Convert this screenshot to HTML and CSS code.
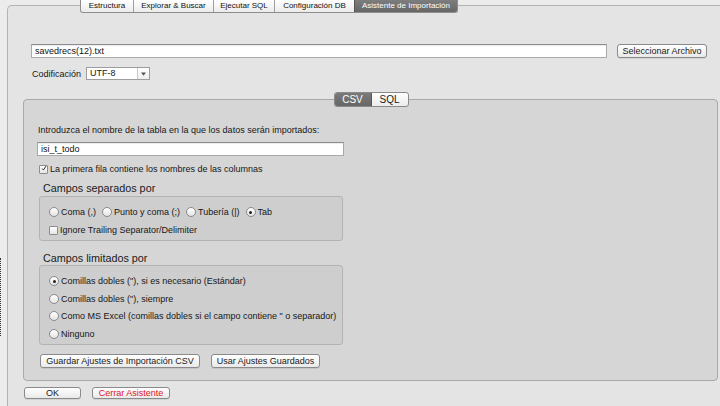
FILE: index.html
```html
<!DOCTYPE html>
<html lang="es">
<head>
<meta charset="utf-8">
<title>Asistente de Importación</title>
<link rel="stylesheet" href="styles.css">
</head>
<body>
<div class="screen">
  <div class="edge"><div class="dots"></div></div>
  <div class="frame">
    <div class="tabs">
      <div class="tab t1">Estructura</div>
      <div class="tab t2">Explorar &amp; Buscar</div>
      <div class="tab t3">Ejecutar SQL</div>
      <div class="tab t4">Configuración DB</div>
      <div class="tab t5 active">Asistente de Importación</div>
    </div>

    <div class="file-row">
      <div class="field file-field">savedrecs(12).txt</div>
      <div class="btn btn-select">Seleccionar Archivo</div>
    </div>

    <div class="enc-row">
      <span class="enc-label">Codificación</span>
      <div class="select"><span class="select-val">UTF-8</span><span class="select-arrow"><svg width="5" height="4" viewBox="0 0 5 4"><path d="M0 0.5 L5 0.5 L2.5 3.8 Z" fill="#555"/></svg></span></div>
    </div>

    <div class="group">
      <div class="seg"><span class="seg-item on">CSV</span><span class="seg-item">SQL</span></div>
      <div class="label">Introduzca el nombre de la tabla en la que los datos serán importados:</div>
      <div class="field table-field">isi_t_todo</div>
      <div class="check-row first-check">
        <span class="checkbox checked"><svg width="9" height="9" viewBox="0 0 9 9"><path d="M1.8 4.6 L3.6 6.8 L7.6 0.8" fill="none" stroke="#222" stroke-width="1.4"/></svg></span>
        <span>La primera fila contiene los nombres de las columnas</span>
      </div>

      <div class="heading h-sep">Campos separados por</div>
      <div class="subbox sep-box">
        <div class="radio-row">
          <span class="opt"><span class="radio"></span>Coma (,)</span>
          <span class="opt"><span class="radio"></span>Punto y coma (;)</span>
          <span class="opt"><span class="radio"></span>Tubería (|)</span>
          <span class="opt"><span class="radio on"></span>Tab</span>
        </div>
        <div class="check-row ignore">
          <span class="checkbox"></span>
          <span>Ignore Trailing Separator/Delimiter</span>
        </div>
      </div>

      <div class="heading h-lim">Campos limitados por</div>
      <div class="subbox lim-box">
        <span class="opt"><span class="radio on"></span>Comillas dobles ("), si es necesario (Estándar)</span>
        <span class="opt"><span class="radio"></span>Comillas dobles ("), siempre</span>
        <span class="opt"><span class="radio"></span>Como MS Excel (comillas dobles si el campo contiene " o separador)</span>
        <span class="opt"><span class="radio"></span>Ninguno</span>
      </div>

      <div class="btn-row">
        <div class="btn btn-save">Guardar Ajustes de Importación CSV</div>
        <div class="btn btn-use">Usar Ajustes Guardados</div>
      </div>
    </div>

    <div class="bottom-row">
      <div class="btn btn-ok">OK</div>
      <div class="btn btn-close">Cerrar Asistente</div>
    </div>
  </div>
</div>
</body>
</html>
```

FILE: styles.css
```css
* { box-sizing: border-box; }
html, body { margin: 0; padding: 0; }
body {
  width: 720px;
  height: 406px;
  overflow: hidden;
  background: #ececec;
  font-family: "Liberation Sans", Arial, sans-serif;
  font-size: 9px;
  color: #161616;
}
.screen { display: flex; height: 406px; }
.edge { width: 7px; flex: none; padding-top: 258px; }
.dots { width: 1px; height: 78px; border-left: 1px dotted #333; }

.frame {
  flex: none;
  width: 720px;
  margin-top: 5px;
  border-top: 1px solid #b3b3b3;
  border-left: 1px solid #b3b3b3;
  border-top-left-radius: 5px;
  background: #e4e4e4;
  display: flex;
  flex-direction: column;
  align-items: flex-start;
}

/* top tabs */
.tabs {
  display: flex;
  margin-top: -6px;
  margin-left: 72px;
  height: 13px;
  border: 1px solid #8e8e8e;
  border-top: none;
  border-radius: 0 0 3px 3px;
  overflow: hidden;
  background: linear-gradient(#ffffff, #ebebeb);
}
.tab {
  height: 12px;
  line-height: 12px;
  text-align: center;
  font-size: 8px;
  color: #111;
  border-left: 1px solid #a0a0a0;
}
.tab.t1 { width: 52px; border-left: none; }
.tab.t2 { width: 80px; }
.tab.t3 { width: 61px; }
.tab.t4 { width: 80px; }
.tab.t5 { width: 103px; }
.tab.active {
  background: linear-gradient(#7d7d7d, #666);
  color: #fff;
  border-left-color: #555;
}

/* fields */
.field {
  background: #fff;
  border: 1px solid #a9a9a9;
  border-top-color: #8c8c8c;
  box-shadow: inset 0 1px 1px rgba(0,0,0,0.08);
  height: 14px;
  line-height: 12px;
  padding-left: 3px;
  color: #111;
}
.file-row {
  display: flex;
  margin-top: 31px;
  margin-left: 23px;
  gap: 10px;
}
.file-field { width: 576px; }

.btn {
  height: 14px;
  line-height: 12px;
  border: 1px solid #8a8a8a;
  border-radius: 3px;
  background: linear-gradient(#ffffff, #e9e9e9);
  box-shadow: 0 1px 0 rgba(0,0,0,0.08);
  text-align: center;
  color: #1a1a1a;
  white-space: nowrap;
}
.btn-select { width: 90px; }

.enc-row {
  display: flex;
  align-items: center;
  margin-top: 9px;
  margin-left: 24px;
  height: 13px;
}
.enc-label { width: 54px; }
.select {
  display: flex;
  width: 64px;
  height: 13px;
  background: #fff;
  border: 1px solid #9d9d9d;
}
.select-val { flex: 1; line-height: 11px; padding-left: 3px; }
.select-arrow {
  width: 12px;
  border-left: 1px solid #c8c8c8;
  display: flex;
  align-items: center;
  justify-content: center;
  background: linear-gradient(#fff, #eee);
}

/* group */
.group {
  margin-top: 19px;
  margin-left: 15px;
  width: 695px;
  height: 282px;
  border: 1px solid #a9a9a9;
  border-radius: 4px;
  background: #d6d6d6;
  padding-left: 14px;
  display: flex;
  flex-direction: column;
  align-items: flex-start;
}
.seg {
  align-self: center;
  display: flex;
  margin-top: -8px;
  margin-left: -13px;
  height: 15px;
  border: 1px solid #8a8a8a;
  border-radius: 3px;
  overflow: hidden;
  background: linear-gradient(#fff, #ececec);
}
.seg-item {
  width: 36px;
  text-align: center;
  line-height: 13px;
  font-size: 10px;
  color: #1a1a1a;
}
.seg-item.on {
  width: 37px;
  background: linear-gradient(#7a7a7a, #666);
  color: #fff;
  border-right: 1px solid #555;
}
.label { margin-top: 18px; height: 11px; line-height: 11px; }
.table-field { margin-top: 6px; margin-left: -1px; width: 307px; }

.check-row { display: flex; align-items: center; height: 12px; gap: 2px; }
.first-check { margin-top: 7px; margin-left: 1px; }
.checkbox {
  width: 9px;
  height: 9px;
  background: linear-gradient(#fff, #e6e6e6);
  border: 1px solid #8d8d8d;
  border-radius: 1px;
  display: flex;
  align-items: center;
  justify-content: center;
  overflow: visible;
}
.checkbox svg { margin-top: -1px; margin-left: 1px; }

.heading {
  font-size: 10.8px;
  height: 13px;
  line-height: 13px;
  margin-left: 5px;
  color: #1a1a1a;
}
.h-sep { margin-top: 7px; }
.h-lim { margin-top: 11px; }

.subbox {
  margin-left: 1px;
  width: 304px;
  border: 1px solid #b3b3b3;
  border-radius: 3px;
  background: #cecece;
  padding-left: 9px;
  display: flex;
  flex-direction: column;
  align-items: flex-start;
}
.sep-box { margin-top: 1px; height: 45px; padding-top: 9px; }
.lim-box { margin-top: 0; height: 80px; padding-top: 9px; gap: 5.7px; }
.radio-row { display: flex; gap: 6px; height: 12px; align-items: center; }
.ignore { margin-top: 6px; }
.opt { display: flex; align-items: center; gap: 2px; height: 12px; }
.radio {
  width: 10px;
  height: 10px;
  border-radius: 50%;
  border: 1px solid #8a8a8a;
  background: linear-gradient(#fff, #e4e4e4);
  display: flex;
  align-items: center;
  justify-content: center;
}
.radio.on::after {
  content: "";
  width: 3px;
  height: 3px;
  border-radius: 50%;
  background: #222;
}

.btn-row { display: flex; gap: 11px; margin-top: 9px; margin-left: 2px; }
.btn-save { width: 160px; }
.btn-use { width: 109px; }

.bottom-row { display: flex; gap: 11px; margin-top: 6px; margin-left: 16px; }
.btn-ok { width: 57px; height: 12px; line-height: 10px; }
.btn-close { width: 78px; height: 12px; line-height: 10px; color: #e0141e; }
```
